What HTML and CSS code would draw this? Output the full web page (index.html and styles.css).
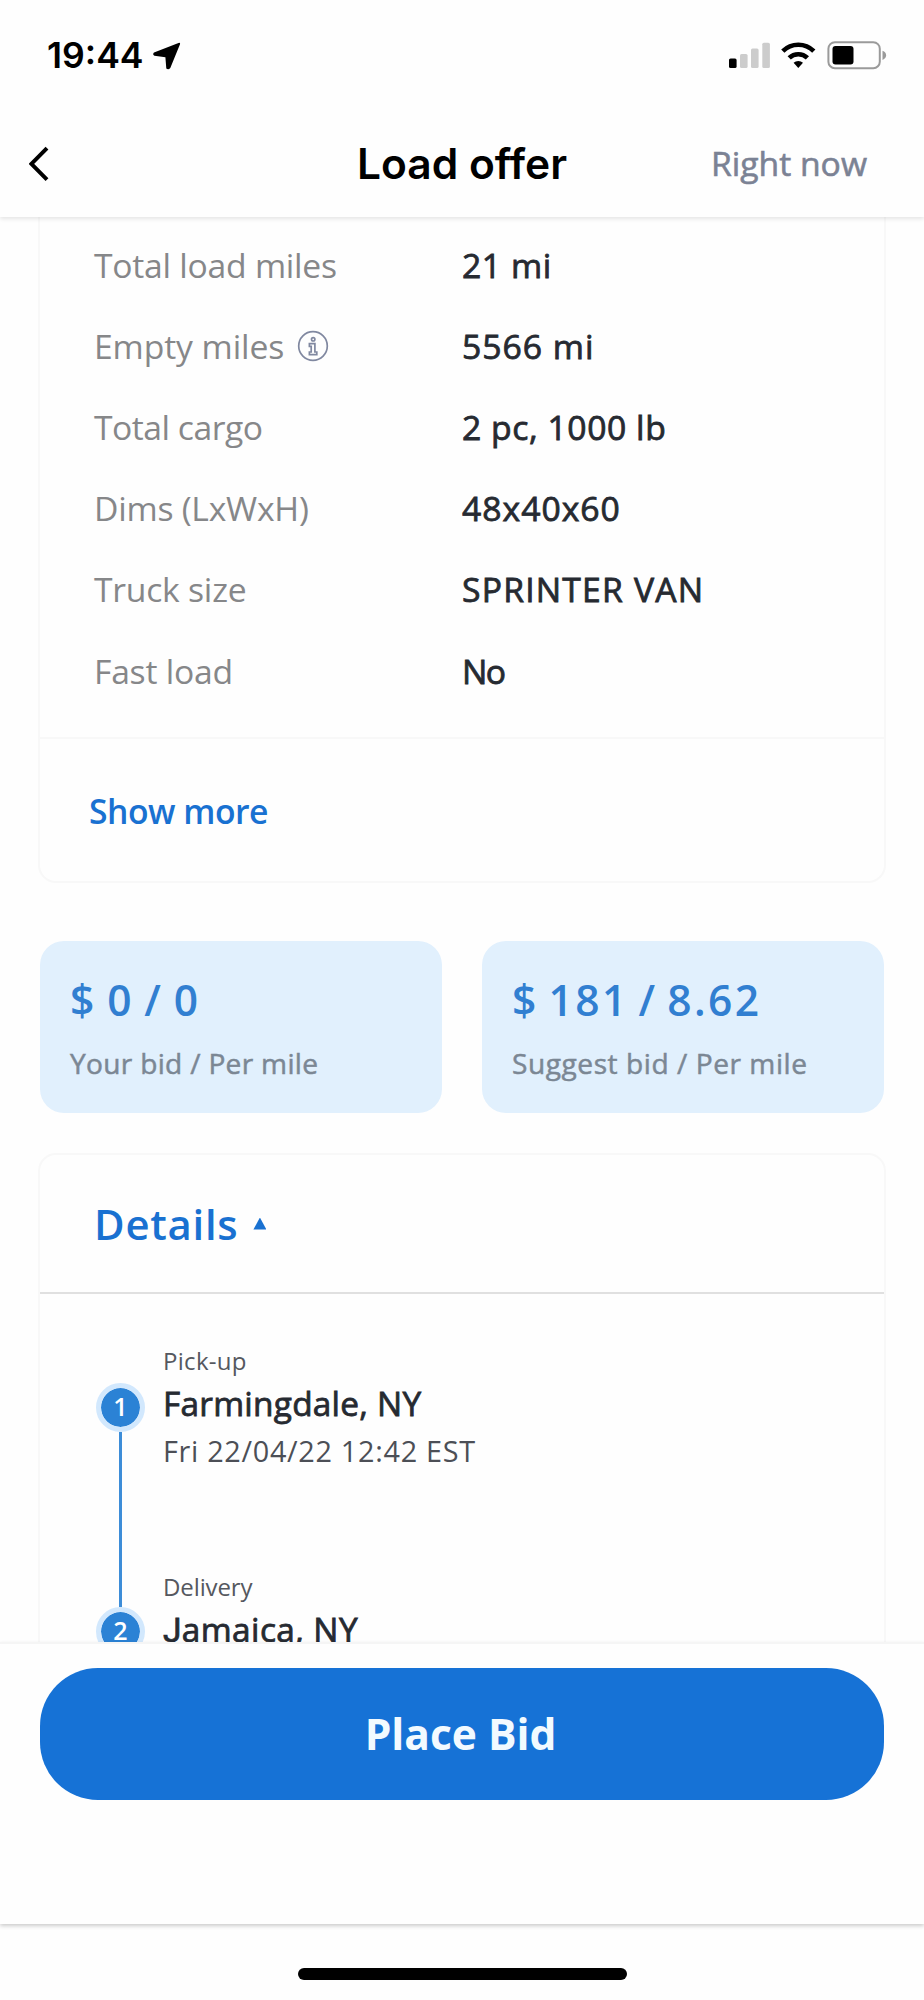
FILE: index.html
```html
<!DOCTYPE html>
<html lang="en">
<head>
<meta charset="utf-8">
<title>Load offer</title>
<link rel="stylesheet" href="styles.css">
</head>
<body>
<div class="screen">
  <header class="header">
    <div class="status">
      <div class="clock">
        <span>19:44</span>
        <svg class="loc" viewBox="0 0 28 28" width="28" height="28"><path d="M1 10.6 25.5.9Q27.6.3 26.9 2.4L17.3 26Q15.2 28.2 13.3 26.4L12.4 15.2 1.4 13.8Q-.8 12.4 1 10.6Z"/></svg>
      </div>
      <svg class="indicators" viewBox="0 0 160 30" width="160" height="30">
        <rect x="1" y="17.5" width="7.6" height="9.5" rx="1.6"/>
        <g fill="#ccc"><rect x="12" y="13" width="7.6" height="14" rx="1.6"/><rect x="23" y="7.5" width="7.6" height="19.5" rx="1.6"/><rect x="34.3" y="1.7" width="7.6" height="25.3" rx="1.6"/></g>
        <g fill="none" stroke="#000" stroke-width="4.6"><path d="M54.8 10.2a22 22 0 0 1 31 0"/><path d="M61.2 16.9a13 13 0 0 1 18.2 0"/></g>
        <path d="M65.6 21.8a7 7 0 0 1 9.4 0L70.3 27Z"/>
        <rect x="100.4" y="1.2" width="51.4" height="26" rx="6.5" fill="none" stroke="#9a9a9a" stroke-width="2"/>
        <rect x="104.5" y="5" width="21" height="18.5" rx="3"/>
        <path d="M154.5 9.7q3.6 1.2 3.6 4.6t-3.6 4.6Z" fill="#9a9a9a"/>
      </svg>
    </div>
    <div class="nav">
      <svg class="back" viewBox="0 0 20 36" width="20" height="36"><path d="M18 2.2 2.4 17.9 18 33.6" fill="none" stroke="#000" stroke-width="4"/></svg>
      <h1 class="title">Load offer</h1>
      <span class="when">Right now</span>
    </div>
  </header>

  <main class="content">
    <section class="card summary">
      <dl class="rows">
        <div class="row"><dt class="tight">Total load miles</dt><dd>21 mi</dd></div>
        <div class="row"><dt>Empty miles
          <svg class="info" viewBox="0 0 32 32" width="32" height="32"><circle cx="16" cy="16" r="14.3"/><path d="M13.2 13.6h4.7v8.4h1.9v2.7h-7.4V22h1.8v-5.7h-1.8v-2.7z"/><circle cx="16.2" cy="9.3" r="1.7"/></svg></dt><dd class="wide">5566 mi</dd></div>
        <div class="row"><dt class="tighter">Total cargo</dt><dd>2 pc, 1000 lb</dd></div>
        <div class="row"><dt class="tight">Dims (LxWxH)</dt><dd class="wide">48x40x60</dd></div>
        <div class="row"><dt class="tight">Truck size</dt><dd class="wider">SPRINTER VAN</dd></div>
        <div class="row"><dt class="tight">Fast load</dt><dd class="narrow">No</dd></div>
      </dl>
      <a class="more">Show more</a>
    </section>

    <section class="bids">
      <div class="bid"><div class="amount">$ 0 / 0</div><div class="caption">Your bid / Per mile</div></div>
      <div class="bid"><div class="amount suggested">$ 181 / 8.62</div><div class="caption roomy">Suggest bid / Per mile</div></div>
    </section>

    <section class="card details">
      <div class="details-head"><span>Details</span><i class="caret"></i></div>
      <div class="route">
        <div class="track">
          <div class="pin">1</div>
          <div class="leg"></div>
          <div class="pin">2</div>
        </div>
        <div class="stops">
          <div class="stop"><div class="kind">Pick-up</div><div class="place">Farmingdale, NY</div><div class="time">Fri 22/04/22 12:42 EST</div></div>
          <div class="stop"><div class="kind short">Delivery</div><div class="place jamaica">Jamaica, NY</div></div>
        </div>
      </div>
    </section>
  </main>

  <footer class="footer">
    <button class="place-bid">Place Bid</button>
  </footer>
  <div class="home"><div class="home-bar"></div></div>
</div>
</body>
</html>
```
FILE: styles.css
```css
* { box-sizing: border-box; }

body {
  margin: 0;
  background: #fefefe;
  font-family: "Open Sans", "Noto Sans", sans-serif;
  color: #262a31;
}

.screen {
  width: 924px;
  height: 2000px;
  display: flex;
  flex-direction: column;
  overflow: hidden;
}

.header {
  flex: none;
  height: 217px;
  background: #fefefe;
  box-shadow: 0 2px 4px rgba(0, 0, 0, .1);
  z-index: 1;
}

.status {
  height: 111px;
  padding: 0 36px 0 47px;
  display: flex;
  align-items: center;
  justify-content: space-between;
}

.clock {
  display: flex;
  align-items: center;
  gap: 9px;
  font: 600 35.6px/44px Inter, sans-serif;
  color: #000;
}

.loc { margin-top: 1px; }

.nav {
  height: 106px;
  padding: 0 57px 0 29px;
  display: grid;
  grid-template-columns: 1fr auto 1fr;
  align-items: center;
}

.title {
  margin: 0 -28px 0 0;
  font: 600 42.5px/52px Inter, sans-serif;
  color: #000;
}

.when {
  justify-self: end;
  font-size: 33.7px;
  line-height: 46px;
  color: #7b8294;
  -webkit-text-stroke: .6px #7b8294;
  padding-bottom: 2px;
}

.content {
  flex: none;
  height: 1425px;
  padding: 0 38px;
  overflow: hidden;
}

.card {
  border: 2px solid #f8f8f8;
  border-radius: 18px;
}

.summary {
  height: 666px;
  border-top: 0;
  border-radius: 0 0 18px 18px;
  padding-top: 7px;
}

.rows {
  height: 514.5px;
  margin: 0;
  border-bottom: 2px solid #f8f8f8;
}

.row {
  display: grid;
  grid-template-columns: 368px 1fr;
  align-items: center;
  height: 81.2px;
  padding-left: 54px;
  font-size: 33.7px;
  line-height: 46px;
}

dt {
  display: flex;
  align-items: center;
  gap: 13px;
  letter-spacing: -.1px;
  color: #868789;
}

dt.tight { letter-spacing: -.25px; }
dt.tighter { letter-spacing: -.5px; }

dd {
  margin: 0;
  letter-spacing: .55px;
  -webkit-text-stroke: .8px #262a31;
}

dd.wide { letter-spacing: 1px; }
dd.wider { letter-spacing: 1.2px; }
dd.narrow { letter-spacing: -1.5px; }

.info {
  fill: none;
  stroke: #8088a0;
  stroke-width: 1.7;
}

.more {
  display: flex;
  align-items: center;
  height: 144px;
  padding-left: 49px;
  font-size: 33.7px;
  font-weight: 600;
  letter-spacing: -.49px;
  color: #1971d1;
}

.bids {
  display: grid;
  grid-template-columns: 1fr 1fr;
  gap: 40px;
  margin: 58px 2px 40px;
}

.bid {
  height: 172px;
  padding: 30.5px 0 0 30px;
  border-radius: 24px;
  background: #e1f0fd;
}

.amount {
  font-size: 42.5px;
  line-height: 56px;
  font-weight: 600;
  letter-spacing: 1.6px;
  word-spacing: -1.4px;
  color: #317fd1;
}

.amount.suggested {
  letter-spacing: 2.4px;
  word-spacing: -3.6px;
}

.caption {
  margin-top: 15px;
  font-size: 28.1px;
  line-height: 40px;
  letter-spacing: .31px;
  color: #7b8794;
  -webkit-text-stroke: .5px #7b8794;
}

.caption.roomy { letter-spacing: .55px; }

.details { height: 600px; }

.details-head {
  height: 139px;
  padding-left: 54px;
  display: flex;
  align-items: center;
  gap: 15px;
  border-bottom: 2px solid #e0e0e0;
  font-size: 41.8px;
  font-weight: 600;
  letter-spacing: .75px;
  color: #1971d1;
}

.caret {
  width: 13px;
  height: 12px;
  background: #1971d1;
  clip-path: polygon(50% 0, 100% 100%, 0 100%);
}

.route {
  display: flex;
  gap: 18px;
  padding: 49px 0 0 56px;
}

.track {
  width: 49px;
  padding-top: 40px;
  display: flex;
  flex-direction: column;
  align-items: center;
}

.pin {
  width: 49px;
  height: 49px;
  border: 5px solid #d2e8fd;
  border-radius: 50%;
  background: #2b82d5;
  background-clip: padding-box;
  color: #fff;
  font-size: 25px;
  font-weight: 600;
  line-height: 37px;
  text-align: center;
}

.leg {
  width: 3px;
  height: 175px;
  background: #3d8dd8;
}

.stop { height: 226.3px; }

.kind {
  font-size: 24px;
  line-height: 36px;
  letter-spacing: .3px;
  color: #55585f;
}

.kind.short { letter-spacing: -.1px; }

.place {
  margin-top: 1px;
  font-size: 33.4px;
  line-height: 46px;
  letter-spacing: .25px;
  -webkit-text-stroke: .8px #262a31;
}

.place.jamaica { letter-spacing: .4px; }
.place.jamaica::first-letter { font-family: Roboto, sans-serif; }

.time {
  margin-top: 5px;
  font-size: 28.8px;
  line-height: 40px;
  letter-spacing: .7px;
  color: #4c4f56;
}

.footer {
  flex: none;
  height: 282px;
  padding: 24px 40px 0;
  border-top: 2px solid #f5f5f5;
  background: #fefefe;
  box-shadow: 0 2px 4px rgba(0, 0, 0, .2);
}

.place-bid {
  width: 100%;
  height: 132px;
  padding: 0 3px 0 0;
  border: 0;
  border-radius: 58px;
  background: #1672d6;
  color: #f2faff;
  font: 700 42.5px/56px "Open Sans", "Noto Sans", sans-serif;
}

.home {
  flex: 1;
  display: flex;
  justify-content: center;
  padding-top: 44px;
}

.home-bar {
  width: 329px;
  height: 12px;
  border-radius: 6px;
  background: #000;
}
```
